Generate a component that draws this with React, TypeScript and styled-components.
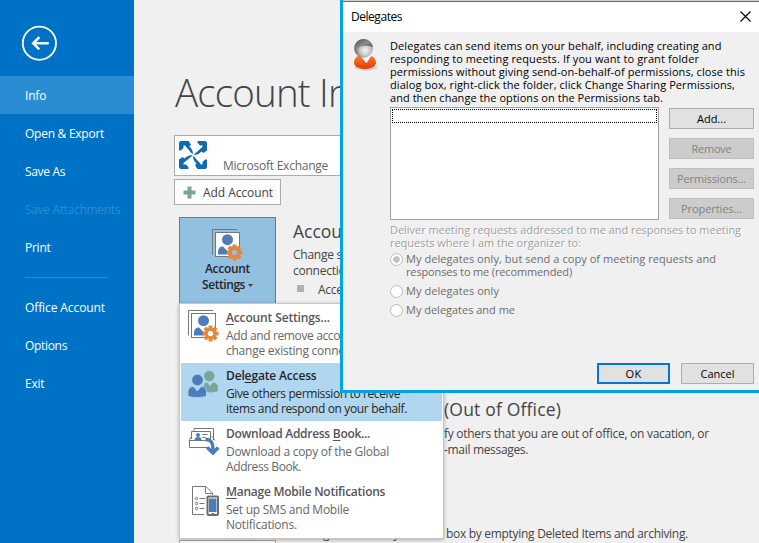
import React from "react";
import styled, { createGlobalStyle, css } from "styled-components";

const Global = createGlobalStyle`
  * { box-sizing: border-box; }
  html, body { margin: 0; padding: 0; overflow: hidden; background: #f0f0f0; }
  body { font-family: "Open Sans", "Noto Sans", sans-serif; font-size: 12px; color: #444; }
  button { font-family: inherit; padding: 0; margin: 0; border-radius: 0; }
`;

const Window = styled.div`
  position: relative;
  display: flex;
  width: 759px;
  height: 543px;
  overflow: hidden;
  background: #f0f0f0;
`;

const Text = styled.span<{ $ls?: number }>`
  display: block;
  white-space: pre;
  letter-spacing: ${(p) => p.$ls ?? 0}px;
`;

/* ---------- Sidebar ---------- */

const Sidebar = styled.nav`
  flex: 0 0 134px;
  height: 543px;
  background: #0072c6;
  color: #fff;
`;

const BackArea = styled.div`
  height: 76px;
  padding: 25px 0 0 21px;
`;

const NavItem = styled.div<{ $active?: boolean; $disabled?: boolean }>`
  display: flex;
  align-items: center;
  height: 38px;
  padding: 1px 0 0 25px;
  background: ${(p) => (p.$active ? "#2a8dd4" : "transparent")};
  color: ${(p) => (p.$disabled ? "#2a8dd4" : "#fff")};
`;

const NavDivider = styled.div`
  height: 1px;
  margin: 11px 26px 10px 25px;
  background: #2a8dd4;
`;

/* ---------- Info page ---------- */

const Page = styled.main`
  flex: 1;
  padding: 67px 0 0 40px;
  overflow: hidden;
`;

const Title = styled.h1`
  margin: 0;
  height: 68px;
  padding-left: 1px;
  line-height: 51px;
  font-size: 38.5px;
  font-weight: 300;
  white-space: pre;
  letter-spacing: -0.82px;
  color: #444;
`;

const AccountPicker = styled.div`
  display: flex;
  width: 420px;
  height: 41px;
  padding: 5px 0 0 4px;
  background: #fff;
  border: 1px solid #ababab;
  color: #666;
`;

const PickerLabel = styled.div`
  padding: 17px 0 0 16px;
  line-height: 16px;
`;

const AddButton = styled.button`
  display: flex;
  align-items: center;
  width: 107px;
  height: 26px;
  margin-top: 3px;
  padding: 1px 0 0 8px;
  gap: 7px;
  background: #fdfdfd;
  border: 1px solid #ababab;
  font-size: 12px;
  color: #444;
`;

const Section = styled.section<{ $gap: number }>`
  display: flex;
  gap: 17px;
  height: 86px;
  margin: ${(p) => p.$gap}px 0 0 5px;
`;

const TileButton = styled.button<{ $open?: boolean }>`
  display: flex;
  flex: 0 0 97px;
  flex-direction: column;
  align-items: center;
  height: 87px;
  padding-top: 11px;
  background: ${(p) => (p.$open ? "#92c0e0" : "#fdfdfd")};
  border: 1px solid ${(p) => (p.$open ? "#2a8dd4" : "#ababab")};
  font-size: 12px;
  font-weight: 600;
  line-height: 16px;
  color: #262626;
`;

const TileCaption = styled.span`
  display: flex;
  align-items: center;
  gap: 3px;
`;

const SectionBody = styled.div`
  line-height: 16px;
`;

const SectionTitle = styled.h2<{ $line?: number }>`
  display: flex;
  margin: 0 0 5px;
  height: 25px;
  line-height: ${(p) => p.$line ?? 28}px;
  font-size: 17.5px;
  font-weight: 400;
  color: #444;
`;

const Row = styled.div`
  display: flex;
`;

const MailboxHint = styled(Row)`
  margin-top: -14px;
`;

const Lead = styled.span<{ $w: number }>`
  flex: 0 0 ${(p) => p.$w}px;
  white-space: pre;
  letter-spacing: -0.4px;
`;

const Bullet = styled.div`
  display: flex;
  align-items: center;
  gap: 14px;
  padding: 3px 0 0 4px;
  &::before {
    content: "";
    width: 7px;
    height: 7px;
    margin-top: -3px;
    background: #b1b1b1;
  }
`;

/* ---------- Drop-down menu ---------- */

const Menu = styled.div`
  position: absolute;
  left: 179px;
  top: 303px;
  width: 265px;
  height: 236px;
  padding: 1px;
  background: #fff;
  border: 1px solid #c6c6c6;
  box-shadow: 0 1px 4px rgba(0, 0, 0, 0.28);
`;

const MenuItem = styled.div<{ $active?: boolean }>`
  display: flex;
  height: 58px;
  padding: 5px 0 0 7px;
  gap: 6px;
  line-height: 15px;
  background: ${(p) => (p.$active ? "#b1d6f0" : "transparent")};
  color: ${(p) => (p.$active ? "#262626" : "#666")};
`;

const MenuIcon = styled.div`
  flex: 0 0 32px;
  height: 34px;
`;

const MenuTitle = styled.div<{ $active?: boolean; $ls: number }>`
  height: 18px;
  font-weight: 600;
  white-space: pre;
  letter-spacing: ${(p) => p.$ls}px;
  color: ${(p) => (p.$active ? "#262626" : "#555")};
  u { text-underline-offset: 2px; }
`;

/* ---------- Dialog ---------- */

const Dialog = styled.div`
  position: absolute;
  left: 340px;
  top: 0;
  width: 419px;
  height: 393px;
  background: #f0f0f0;
  border: solid #00a2e8;
  border-width: 0 0 3px 3px;
  color: #000;
  font-size: 11px;
  line-height: 13px;
`;

const TitleBar = styled.header`
  display: flex;
  align-items: center;
  justify-content: space-between;
  height: 32px;
  padding: 0 8px 0 8px;
  background: #fff;
  border-top: 1px solid #d0d0d0;
  box-shadow: inset 0 1px #6b6b6b;
  font-size: 12px;
`;

const DialogBody = styled.div`
  display: flex;
  padding: 7px 5px 0 10px;
`;

const PersonSlot = styled.div`
  flex: 0 0 37px;
`;

const Content = styled.div`
  flex: 1;
`;

const Intro = styled.div`
  height: 68px;
`;

const ListArea = styled.div`
  display: flex;
  gap: 10px;
  height: 113px;
`;

const ListBox = styled.div`
  flex: 0 0 269px;
  padding: 1px;
  background: #fff;
  border: 1px solid #a0a0a5;
`;

const FocusRow = styled.div`
  height: 14px;
  border: 1px dotted #000;
`;

const ButtonStack = styled.div`
  display: flex;
  flex-direction: column;
  gap: 9px;
  padding-top: 1px;
`;

const disabledStyle = css`
  background: #ccc;
  border-color: #bfbfbf;
  color: #838383;
`;

const DialogButton = styled.button<{ $w: number; $primary?: boolean; $disabled?: boolean }>`
  display: flex;
  align-items: center;
  justify-content: center;
  width: ${(p) => p.$w}px;
  height: 21px;
  padding-bottom: 1px;
  background: #e1e1e1;
  border: ${(p) => (p.$primary ? "2px solid #0078d7" : "1px solid #adadad")};
  font-size: 11px;
  line-height: 15px;
  color: #000;
  ${(p) => p.$disabled && disabledStyle}
`;

const GroupLabel = styled.div`
  height: 32px;
  padding-top: 3px;
  color: #a0a0a0;
  text-shadow: 1px 1px #fff;
`;

const RadioRow = styled.div<{ $h: number }>`
  display: flex;
  gap: 3px;
  height: ${(p) => p.$h}px;
  color: #6d6d6d;
`;

const Radio = styled.span<{ $on?: boolean }>`
  width: 13px;
  height: 13px;
  margin-top: 1px;
  border: 1px solid #bcbcbc;
  border-radius: 50%;
  background: ${(p) => (p.$on ? "radial-gradient(circle, #c4c4c4 3px, #fff 3.6px)" : "#fff")};
`;

const Footer = styled.footer`
  display: flex;
  justify-content: flex-end;
  gap: 11px;
  padding: 36px 5px 0 0;
`;

/* ---------- Icons ---------- */

const BackIcon = () => (
  <svg width="36" height="36" viewBox="0 0 36 36" fill="none" stroke="#fff" display="block">
    <circle cx="18.4" cy="18.2" r="16.6" strokeWidth="1.8" />
    <path d="M27.8 18.3H12.5" strokeWidth="2.4" />
    <path d="M18.3 12.2L12.2 18.3l6.1 6.1" strokeWidth="2.5" />
  </svg>
);

const ExchangeIcon = () => (
  <svg width="28" height="28" viewBox="0 0 28 28" display="block">
    <g fill="#0f6ab4">
      {[0, 90, 180, 270].map((a) => (
        <path
          key={a}
          transform={`rotate(${a} 14 14)`}
          d="M0 9.500V1.500L1.500 0H9.500L12 3.500L10.500 5.500C13 8 14.500 10.500 13.600 13.600C12 11.500 10.500 9.500 8 7L6 4.500H4.500V7L1.800 9.500Z"
        />
      ))}
    </g>
  </svg>
);

const PlusIcon = () => (
  <svg width="13" height="13" viewBox="0 0 13 13" display="block">
    <path d="M4.5 0.5h4v4h4v4h-4v4h-4v-4h-4v-4h4z" fill="#76a797" />
  </svg>
);

const Gear = () => (
  <g transform="translate(22.5 23.5)">
    <g fill="#e8873a">
      {[0, 45, 90, 135, 180, 225, 270, 315].map((a) => (
        <rect key={a} x="-2" y="-8" width="4" height="5" transform={`rotate(${a})`} />
      ))}
    </g>
    <circle r="4.2" fill="none" stroke="#e8873a" strokeWidth="3" />
  </g>
);

const SettingsIcon = ({ bg }: { bg: string }) => (
  <svg width="32" height="32" viewBox="0 0 32 32" display="block">
    <path d="M.5 25.5V.5H25" fill="none" stroke="#777" />
    <rect x="3.5" y="3.5" width="24" height="24" fill="#fff" stroke="#777" />
    <circle cx="15.5" cy="10.7" r="5.5" fill="#4a7ebb" />
    <path d="M6 25.5v-3c0-3 2-5 5-5l4.5 4.5V25.5z" fill="#4a7ebb" />
    <circle cx="22.5" cy="23.5" r="6.8" fill={bg} />
    <Gear />
  </svg>
);

const PeopleIcon = () => (
  <svg width="32" height="32" viewBox="0 0 32 32" display="block">
    <circle cx="21.3" cy="8" r="5.2" fill="#76a797" />
    <path d="M15 22.5c0-5 1.5-8 4-8l3 3.5 3-3.5c3.5 0 5 2.5 5 6V23c-4 2-11 2-15-.5z" fill="#76a797" />
    <circle cx="9.5" cy="12" r="5.8" fill="#4a7ebb" stroke="#b1d6f0" strokeWidth=".8" />
    <path d="M0 28v-4c0-3.5 2-5.5 5.5-5.5L9.3 23l4-4.5c3.5 0 5.2 2 5.2 5.5v4c-5 2-13.500 2-18.500 0z" fill="#4a7ebb" stroke="#b1d6f0" strokeWidth=".8" />
  </svg>
);

const DownloadIcon = () => (
  <svg width="32" height="32" viewBox="0 0 32 32" fill="none" stroke="#777" display="block">
    <path d="M6 5V2.500h19.500V14M3.500 13V5.500h19V14" fill="#fff" />
    <circle cx="10" cy="9" r="2" fill="#4a7ebb" stroke="none" />
    <path d="M6.500 14c0-2 1.300-3 3.500-3s3.500 1 3.500 3z" fill="#4a7ebb" stroke="none" />
    <path d="M14.500 8.500h5M14.500 11.500h3M3.500 10.500L1 14.500h17M1.500 14.500v7h19M24 10.500l3 4" />
    <path d="M17.500 13.500c6 0 7.500 3 7.500 12M19.200 21.500L25 27l5.300-5.500" stroke="#4a7ebb" strokeWidth="3.400" />
  </svg>
);

const MobileIcon = () => (
  <svg width="32" height="32" viewBox="0 0 32 32" fill="none" stroke="#777" display="block">
    <path d="M16 30.500H4.500V2.500H18l6.500 6.500v2M17.500 2.500V9.500h6.500" />
    <g>
      <circle cx="8.500" cy="14.500" r="1.200" />
      <circle cx="8.500" cy="19.500" r="1.200" />
      <circle cx="8.500" cy="24.500" r="1.200" />
      <path d="M11.500 14.500h6M11.500 19.500h5M11.500 24.500h5" />
    </g>
    <rect x="19.500" y="12.500" width="10.500" height="18.500" rx="1" fill="#fff" stroke="#6b6b6b" strokeWidth="2" />
    <rect x="21" y="14.500" width="7.500" height="13.500" fill="#4a7ebb" stroke="none" />
    <path d="M23.500 29.500h2.500" strokeWidth="1" />
  </svg>
);

const DelegateIcon = () => (
  <svg width="26" height="34" viewBox="0 0 26 34" display="block">
    <defs>
      <radialGradient id="face" cx=".6" cy=".6" r=".6">
        <stop offset="0" stopColor="#f6f6f6" />
        <stop offset=".5" stopColor="#c4c4c4" />
        <stop offset="1" stopColor="#5c5c5c" />
      </radialGradient>
      <linearGradient id="hair" x1="0" y1="0" x2="1" y2="1">
        <stop offset="0" stopColor="#4a4a4a" />
        <stop offset=".5" stopColor="#8c8c8c" />
        <stop offset="1" stopColor="#4c4c4c" />
      </linearGradient>
      <linearGradient id="shirt" x1="0" y1="0" x2="0" y2="1">
        <stop offset="0" stopColor="#ff7a2e" />
        <stop offset="1" stopColor="#e03c00" />
      </linearGradient>
    </defs>
    <ellipse cx="13" cy="28.500" rx="11.500" ry="3" fill="#b5b5b5" opacity=".5" />
    <path d="M1 24c0-4 2.500-7 6-7.500L13.500 24 18 17c3 1 5 3.500 5 7 0 3-5 6-11 6S1 27.500 1 24z" fill="url(#shirt)" />
    <path d="M7 16.500h11L13.500 24z" fill="#f4f4f4" />
    <circle cx="10.500" cy="9.500" r="9.300" fill="url(#face)" />
    <path d="M1.200 11C.8 4.500 5.500 0 10.500 0c5 0 8.800 3.500 9.300 8C13 5.500 7 6.500 1.200 11z" fill="url(#hair)" />
  </svg>
);

const CloseIcon = () => (
  <svg width="11" height="11" viewBox="0 0 11 11" stroke="#000" strokeWidth="1.100" display="block">
    <path d="M.5 .5l10 10M10.500 .5l-10 10" />
  </svg>
);

const CaretIcon = () => (
  <svg width="5" height="3" viewBox="0 0 5 3" display="block">
    <path d="M0 0h5L2.500 3z" fill="#444" />
  </svg>
);

export default function App() {
  return (
    <>
      <Global />
      <Window>
        <Sidebar>
          <BackArea><BackIcon /></BackArea>
          <NavItem $active><Text $ls={-0.2}>Info</Text></NavItem>
          <NavItem><Text $ls={-0.26}>Open &amp; Export</Text></NavItem>
          <NavItem><Text $ls={-0.34}>Save As</Text></NavItem>
          <NavItem $disabled><Text $ls={-0.32}>Save Attachments</Text></NavItem>
          <NavItem><Text $ls={-0.25}>Print</Text></NavItem>
          <NavDivider />
          <NavItem><Text $ls={-0.1}>Office Account</Text></NavItem>
          <NavItem><Text $ls={-0.32}>Options</Text></NavItem>
          <NavItem><Text $ls={-0.25}>Exit</Text></NavItem>
        </Sidebar>

        <Page>
          <Title>Account Information</Title>
          <AccountPicker>
            <ExchangeIcon />
            <PickerLabel><Text $ls={-0.24}>Microsoft Exchange</Text></PickerLabel>
          </AccountPicker>
          <AddButton><PlusIcon /><Text $ls={-0.06}>Add Account</Text></AddButton>

          <Section $gap={12}>
            <TileButton $open>
              <SettingsIcon bg="#92c0e0" />
              <TileCaption><Text $ls={-0.31}>Account</Text></TileCaption>
              <TileCaption><Text $ls={-0.43}>Settings</Text><CaretIcon /></TileCaption>
            </TileButton>
            <SectionBody>
              <SectionTitle><Text>Account Settings</Text></SectionTitle>
              <Text $ls={-0.25}>Change settings for this account or set up more</Text>
              <Text $ls={-0.25}>connections.</Text>
              <Bullet><Text $ls={-0.25}>Access this account on the web.</Text></Bullet>
            </SectionBody>
          </Section>

          <Section $gap={93}>
            <TileButton />
            <SectionBody>
              <SectionTitle $line={26}>
                <Lead $w={151}>Automatic Replies </Lead>
                <Text $ls={0.18}>(Out of Office)</Text>
              </SectionTitle>
              <Row>
                <Lead $w={151}>Use automatic replies to noti</Lead>
                <Text $ls={-0.28}>fy others that you are out of office, on vacation, or</Text>
              </Row>
              <Row>
                <Lead $w={151}>not available to respond to e</Lead>
                <Text $ls={-0.32}>-mail messages.</Text>
              </Row>
            </SectionBody>
          </Section>

          <Section $gap={58}>
            <TileButton />
            <SectionBody>
              <MailboxHint>
                <Lead $w={153}>Manage the size of your mail</Lead>
                <Text $ls={-0.3}>box by emptying Deleted Items and archiving.</Text>
              </MailboxHint>
            </SectionBody>
          </Section>
        </Page>

        <Menu>
          <MenuItem>
            <MenuIcon><SettingsIcon bg="#fff" /></MenuIcon>
            <div>
              <MenuTitle $ls={-0.14}><u>A</u>ccount Settings...</MenuTitle>
              <Text $ls={-0.37}>Add and remove accounts or</Text>
              <Text $ls={-0.25}>change existing connection settings.</Text>
            </div>
          </MenuItem>
          <MenuItem $active>
            <MenuIcon><PeopleIcon /></MenuIcon>
            <div>
              <MenuTitle $active $ls={-0.15}>Del<u>e</u>gate Access</MenuTitle>
              <Text $ls={-0.38}>Give others permission to receive</Text>
              <Text $ls={-0.36}>items and respond on your behalf.</Text>
            </div>
          </MenuItem>
          <MenuItem>
            <MenuIcon><DownloadIcon /></MenuIcon>
            <div>
              <MenuTitle $ls={-0.28}>Download Address <u>B</u>ook...</MenuTitle>
              <Text $ls={-0.28}>Download a copy of the Global</Text>
              <Text $ls={-0.39}>Address Book.</Text>
            </div>
          </MenuItem>
          <MenuItem>
            <MenuIcon><MobileIcon /></MenuIcon>
            <div>
              <MenuTitle $ls={-0.26}><u>M</u>anage Mobile Notifications</MenuTitle>
              <Text $ls={-0.25}>Set up SMS and Mobile</Text>
              <Text $ls={-0.2}>Notifications.</Text>
            </div>
          </MenuItem>
        </Menu>

        <Dialog>
          <TitleBar><Text $ls={-0.46}>Delegates</Text><CloseIcon /></TitleBar>
          <DialogBody>
            <PersonSlot><DelegateIcon /></PersonSlot>
            <Content>
              <Intro>
                <Text $ls={0.071}>Delegates can send items on your behalf, including creating and</Text>
                <Text $ls={0.097}>responding to meeting requests. If you want to grant folder</Text>
                <Text $ls={0.079}>permissions without giving send-on-behalf-of permissions, close this</Text>
                <Text $ls={0.077}>dialog box, right-click the folder, click Change Sharing Permissions,</Text>
                <Text $ls={0.048}>and then change the options on the Permissions tab.</Text>
              </Intro>
              <ListArea>
                <ListBox><FocusRow /></ListBox>
                <ButtonStack>
                  <DialogButton $w={85}><Text>Add...</Text></DialogButton>
                  <DialogButton $w={85} $disabled><Text $ls={-0.24}>Remove</Text></DialogButton>
                  <DialogButton $w={85} $disabled><Text $ls={-0.13}>Permissions...</Text></DialogButton>
                  <DialogButton $w={85} $disabled><Text $ls={-0.07}>Properties...</Text></DialogButton>
                </ButtonStack>
              </ListArea>
              <GroupLabel>
                <Text $ls={-0.039}>Deliver meeting requests addressed to me and responses to meeting</Text>
                <Text $ls={-0.032}>requests where I am the organizer to:</Text>
              </GroupLabel>
              <RadioRow $h={32}>
                <Radio $on />
                <div>
                  <Text $ls={0.055}>My delegates only, but send a copy of meeting requests and</Text>
                  <Text $ls={-0.142}>responses to me (recommended)</Text>
                </div>
              </RadioRow>
              <RadioRow $h={19}><Radio /><Text $ls={0.056}>My delegates only</Text></RadioRow>
              <RadioRow $h={24}><Radio /><Text $ls={-0.011}>My delegates and me</Text></RadioRow>
            </Content>
          </DialogBody>
          <Footer>
            <DialogButton $w={73} $primary><Text $ls={0.35}>OK</Text></DialogButton>
            <DialogButton $w={73}><Text>Cancel</Text></DialogButton>
          </Footer>
        </Dialog>
      </Window>
    </>
  );
}
